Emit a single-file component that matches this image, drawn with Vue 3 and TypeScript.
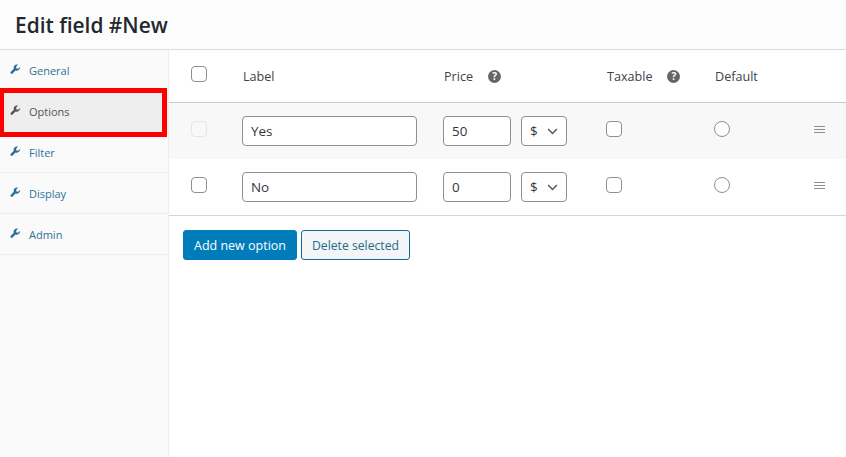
<script setup lang="ts">
interface Row { label: string; price: string; muted: boolean }
const tabs: string[] = ['General', 'Options', 'Filter', 'Display', 'Admin']
const rows: Row[] = [
  { label: 'Yes', price: '50', muted: true },
  { label: 'No', price: '0', muted: false },
]
const wrench = 'M14.6 4.2 11.9 6.9 9.4 6.4 8.9 3.9 11.6 1.2C9.9.5 7.9.9 6.6 2.2 5.3 3.5 5 5.4 5.6 7L1.2 11.4C.5 12.1.5 13.2 1.2 13.9 1.9 14.6 3 14.6 3.7 13.9L8.1 9.5C9.7 10.1 11.6 9.8 12.9 8.5 14.2 7.2 15.2 5.9 14.6 4.2Z'
</script>

<template>
  <div class="page">
    <header class="head"><h1>Edit field #New</h1></header>
    <div class="body">
      <nav class="side">
        <a v-for="t in tabs" :key="t" class="tab" :class="{ active: t === 'Options' }">
          <svg class="wrench" viewBox="0 0 16 16" aria-hidden="true"><path :d="wrench" /></svg>
          <span>{{ t }}</span>
        </a>
      </nav>
      <main class="main">
        <div class="grid thead">
          <span class="cell"><i class="check"></i></span>
          <span class="th">Label</span>
          <span class="th">Price<b class="help">?</b></span>
          <span class="th">Taxable<b class="help">?</b></span>
          <span class="th">Default</span>
          <span></span>
        </div>
        <div v-for="r in rows" :key="r.label" class="grid row" :class="{ muted: r.muted }">
          <span class="cell"><i class="check" :class="{ off: r.muted }"></i></span>
          <span class="cell"><span class="input label">{{ r.label }}</span></span>
          <span class="cell price">
            <span class="input num">{{ r.price }}</span>
            <span class="input cur">$
              <svg viewBox="0 0 12 8" aria-hidden="true"><path d="M1 1.2 6 6.2 11 1.2" /></svg>
            </span>
          </span>
          <span class="cell"><i class="check"></i></span>
          <span class="cell"><i class="radio"></i></span>
          <span class="cell"><span class="handle"><i></i><i></i><i></i></span></span>
        </div>
        <div class="actions">
          <button class="btn primary">Add new option</button>
          <button class="btn ghost">Delete selected</button>
        </div>
      </main>
    </div>
    <div class="mark"></div>
  </div>
</template>

<style>
html, body { margin: 0; background: #fff; }
</style>

<style scoped>
.page {
  position: relative;
  width: 846px;
  height: 457px;
  overflow: hidden;
  background: #fff;
  font-family: "Open Sans", "Noto Sans", sans-serif;
  color: #3c434a;
  box-sizing: border-box;
}
.head {
  height: 49px;
  background: #fcfcfc;
  border-bottom: 1px solid #dcdcde;
  display: flex;
  align-items: center;
  padding-left: 15px;
}
.head h1 {
  margin: 0;
  font-size: 20.9px;
  font-weight: 600;
  color: #23282d;
}
.body { display: flex; height: 407px; }
.side {
  width: 168px;
  flex: none;
  background: #fafafa;
  border-right: 1px solid #eee;
}
.tab {
  height: 40px;
  border-bottom: 1px solid #eee;
  display: flex;
  align-items: center;
  padding-left: 10px;
  gap: 8px;
  font-size: 11px;
  color: #2a7399;
}
.tab.active { background: #eee; color: #555; }
.wrench { width: 11px; height: 11px; fill: #2a6f9c; position: relative; top: -1px; }
.active .wrench { fill: #555; }
.main { flex: 1; }
.grid {
  display: grid;
  grid-template-columns: 73px 201px 163px 108px 84px 1fr;
  align-items: center;
}
.thead {
  height: 52px;
  border-bottom: 1px solid #c9c9c9;
  font-size: 12.6px;
}
.th { position: relative; left: 1px; display: flex; align-items: center; color: #3c434a; }
.cell { display: flex; align-items: center; }
.cell:first-child { padding-left: 22px; }
.row { height: 56px; font-size: 13.4px; }
.row.muted { background: #f8f8f8; }
.row + .row:not(.muted) { border-bottom: 1px solid #d5d5d5; }
.check {
  display: block;
  width: 14px;
  height: 14px;
  border: 1px solid #8c8f94;
  border-radius: 4px;
  background: #fff;
  position: relative;
  top: -2px;
}
.check.off { border-color: #e6e6e6; background: #f8f8f8; }
.radio {
  display: block;
  width: 14px;
  height: 14px;
  border: 1px solid #8c8f94;
  border-radius: 50%;
  background: #fff;
  position: relative;
  top: -2px;
}
.input {
  box-sizing: border-box;
  height: 30px;
  border: 1px solid #8c8f94;
  border-radius: 4px;
  background: #fff;
  display: flex;
  align-items: center;
  padding-left: 8px;
  color: #32373c;
}
.label { width: 175px; }
.price { gap: 10px; }
.num { width: 68px; }
.cur { width: 46px; gap: 9px; }
.cur svg { width: 11px; height: 7px; fill: none; stroke: #50575e; stroke-width: 1.7; }
.help {
  width: 13px;
  height: 13px;
  border-radius: 50%;
  background: #666;
  color: #fff;
  font-size: 10px;
  line-height: 13px;
  text-align: center;
  margin-left: 15px;
  font-weight: 700;
}
.handle { display: flex; flex-direction: column; gap: 2px; margin-left: 16px; position: relative; top: -2px; }
.handle i { display: block; width: 11px; height: 1px; background: #8c8f94; }
.actions { display: flex; gap: 4px; padding: 14px 0 0 14px; }
.btn {
  box-sizing: border-box;
  height: 30px;
  border-radius: 3px;
  font-family: inherit;
  font-size: 12.5px;
  padding: 0;
}
.primary { width: 114px; background: #007cba; border: 1px solid #007cba; color: #fff; }
.ghost { width: 109px; background: #f3f5f6; border: 1px solid #0d6d94; color: #1f6a8e; font-size: 12.2px; }
.mark {
  position: absolute;
  left: 0;
  top: 88px;
  width: 167px;
  height: 49px;
  box-sizing: border-box;
  border: 5.5px solid #f00;
  border-left-width: 4px;
}
</style>
